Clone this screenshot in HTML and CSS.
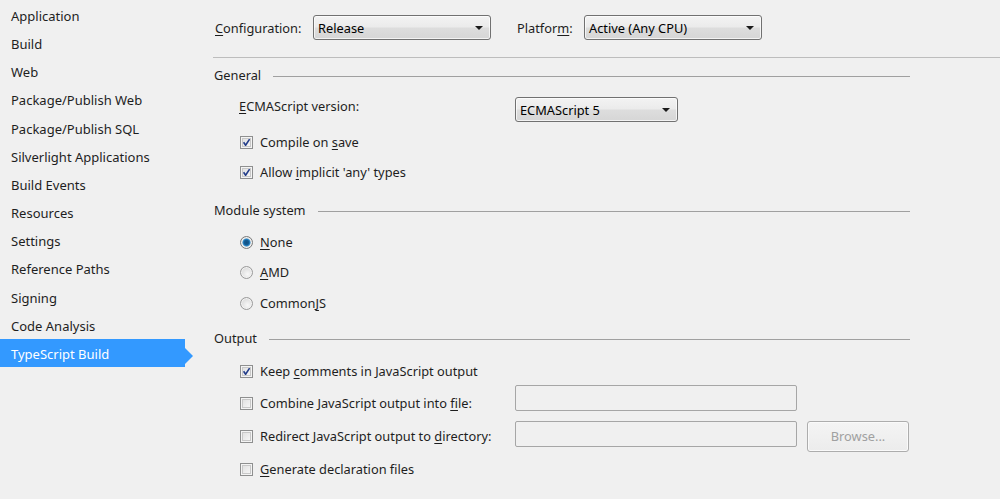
FILE: index.html
```html
<!DOCTYPE html>
<html>
<head>
<meta charset="utf-8">
<link rel="stylesheet" href="styles.css">
</head>
<body>
<div class="page">
  <nav class="sidebar">
    <div class="nav-item">Application</div>
    <div class="nav-item">Build</div>
    <div class="nav-item">Web</div>
    <div class="nav-item">Package/Publish Web</div>
    <div class="nav-item">Package/Publish SQL</div>
    <div class="nav-item">Silverlight Applications</div>
    <div class="nav-item">Build Events</div>
    <div class="nav-item">Resources</div>
    <div class="nav-item">Settings</div>
    <div class="nav-item">Reference Paths</div>
    <div class="nav-item">Signing</div>
    <div class="nav-item">Code Analysis</div>
    <div class="nav-item active">TypeScript Build</div>
  </nav>

  <main class="main">
    <div class="topbar">
      <span class="top-label"><u>C</u>onfiguration:</span>
      <div class="select select-config"><span>Release</span><i class="caret"></i></div>
      <span class="top-label platform-label">Platfor<u>m</u>:</span>
      <div class="select select-platform"><span>Active (Any CPU)</span><i class="caret"></i></div>
    </div>

    <div class="group group-general"><span>General</span><i class="rule"></i></div>

    <div class="row row-ecma">
      <span class="ecma-label"><u>E</u>CMAScript version:</span>
      <div class="select select-ecma"><span>ECMAScript 5</span><i class="caret"></i></div>
    </div>

    <div class="row check-row">
      <span class="box checked"></span><span>Compile on <u>s</u>ave</span>
    </div>
    <div class="row check-row">
      <span class="box checked"></span><span>Allow <u>i</u>mplicit 'any' types</span>
    </div>

    <div class="group group-module"><span>Module system</span><i class="rule"></i></div>

    <div class="row check-row radio-first">
      <span class="radio selected"></span><span><u>N</u>one</span>
    </div>
    <div class="row check-row">
      <span class="radio"></span><span><u>A</u>MD</span>
    </div>
    <div class="row check-row radio-last">
      <span class="radio"></span><span>Common<u>J</u>S</span>
    </div>

    <div class="group group-output"><span>Output</span><i class="rule"></i></div>

    <div class="row check-row keep-row">
      <span class="box checked"></span><span>Keep <u>c</u>omments in JavaScript output</span>
    </div>
    <div class="row check-row combine-row">
      <span class="opt-label"><span class="box"></span><span>Combine JavaScript output into <u>f</u>ile:</span></span>
      <span class="textbox tb-combine"></span>
    </div>
    <div class="row check-row redirect-row">
      <span class="opt-label"><span class="box"></span><span>Redirect JavaScript output to <u>d</u>irectory:</span></span>
      <span class="textbox tb-redirect"></span>
      <span class="button">Browse...</span>
    </div>
    <div class="row check-row generate-row">
      <span class="box"></span><span><u>G</u>enerate declaration files</span>
    </div>
  </main>
</div>
</body>
</html>
```

FILE: styles.css
```css
html, body {
  margin: 0;
  padding: 0;
  background: #f0f0f0;
}
body {
  font-family: "Noto Sans", "Open Sans", sans-serif;
  font-size: 12.8px;
  color: #1e1e1e;
  width: 1000px;
  height: 499px;
  overflow: hidden;
}
u { text-decoration: underline; text-underline-offset: 2px; }

.page {
  display: flex;
  height: 499px;
}

/* sidebar */
.sidebar {
  width: 200px;
  flex: none;
  display: flex;
  flex-direction: column;
  padding-top: 1px;
}
.nav-item {
  height: 28.17px;
  line-height: 28px;
  padding-left: 11px;
  padding-top: 1px;
  box-sizing: border-box;
  white-space: nowrap;
  font-size: 13px;
}
.nav-item.active {
  width: 193px;
  background: #3399ff;
  color: #ffffff;
  clip-path: polygon(0 0, 185px 0, 185px 9px, 193px 17px, 185px 25px, 185px 100%, 0 100%);
}

/* main */
.main {
  flex: 1;
  display: flex;
  flex-direction: column;
}

.topbar {
  height: 58px;
  box-sizing: border-box;
  padding: 0 0 2px 2px;
  margin-left: 13px;
  border-bottom: 1px solid #bdbdbd;
  display: flex;
  align-items: center;
}
.top-label { width: 98px; }
.platform-label { width: 67px; margin-left: 26px; }

.select {
  height: 25px;
  box-sizing: border-box;
  border: 1px solid #717171;
  border-radius: 3px;
  background: linear-gradient(#f3f3f3 0%, #ebebeb 48%, #dddddd 52%, #d6d6d6 100%);
  box-shadow: inset 0 0 0 1px rgba(255,255,255,0.7);
  display: flex;
  align-items: center;
  padding-left: 4px;
  padding-right: 7px;
  color: #000;
}
.select span { flex: 1; }
.caret {
  width: 0;
  height: 0;
  border-left: 4px solid transparent;
  border-right: 4px solid transparent;
  border-top: 4px solid #1a1a1a;
}
.select-config { width: 178px; }
.select-platform { width: 178px; }
.select-ecma { width: 163px; }

.group {
  display: flex;
  align-items: center;
  padding-left: 14px;
  width: 696px;
  height: 30px;
}
.group .rule {
  flex: 1;
  height: 1px;
  background: #a0a0a0;
  margin-left: 12px;
  margin-top: 3px;
}
.group-general { margin-top: 0; height: 34px; }
.group-module { margin-top: 8px; }
.group-output { margin-top: 5px; }

.row {
  display: flex;
  align-items: center;
  padding-left: 39px;
}
.row-ecma { height: 35px; }
.ecma-label {
  width: 276px;
  margin-bottom: 7px;
}

.check-row {
  height: 30px;
  padding-left: 40px;
}
.opt-label {
  display: flex;
  align-items: center;
  width: 275px;
}

.box {
  width: 13px;
  height: 13px;
  box-sizing: border-box;
  border: 1px solid #8e8f8f;
  background: linear-gradient(135deg, #dcdcdc, #fbfbfb);
  box-shadow: inset 0 0 0 1px #f4f4f4, inset 0 0 0 2px #c8c8c8;
  margin-right: 7px;
  flex: none;
  display: inline-block;
}
.box.checked {
  background:
    url("data:image/svg+xml;utf8,<svg xmlns='http://www.w3.org/2000/svg' width='11' height='11' viewBox='0 0 11 11'><path d='M2.6 5.2 L4.6 8.3 L8.6 2.1' fill='none' stroke='%23233d8a' stroke-width='1.6'/></svg>") center / 11px 11px no-repeat,
    linear-gradient(135deg, #dcdcdc, #fbfbfb);
}

.radio {
  width: 13px;
  height: 13px;
  box-sizing: border-box;
  border-radius: 50%;
  border: 1px solid #9a9a9a;
  background: radial-gradient(circle at 60% 65%, #f8f8f8 0%, #dcdcdc 70%, #cfcfcf 100%);
  box-shadow: inset 0 0 0 1px #f2f2f2;
  margin-right: 7px;
  flex: none;
}
.radio.selected {
  border-color: #7a7a7a;
  background:
    radial-gradient(circle at 50% 50%, #0f4f82 0%, #145c94 30%, #2f8ccc 45%, #dedede 58%, #d0d0d0 100%);
}
.radio-first { margin-top: 2px; }
.radio-last { margin-top: 1px; }

.keep-row { margin-top: 3px; }
.combine-row { margin-top: 2px; }
.redirect-row { margin-top: 3px; }
.generate-row { margin-top: 3px; }

.textbox {
  width: 282px;
  height: 26px;
  box-sizing: border-box;
  border: 1px solid #a6a6a6;
  border-radius: 2px;
  background: #f0f0f0;
  flex: none;
}
.tb-combine { margin-bottom: 10px; }
.tb-redirect { margin-bottom: 4px; }

.button {
  width: 102px;
  height: 31px;
  box-sizing: border-box;
  margin-left: 10px;
  border: 1px solid #adadad;
  border-radius: 3px;
  background: linear-gradient(#f4f4f4, #ececec);
  box-shadow: inset 0 0 0 1px #fafafa;
  color: #a0a0a0;
  display: flex;
  align-items: center;
  justify-content: center;
  flex: none;
}
```
